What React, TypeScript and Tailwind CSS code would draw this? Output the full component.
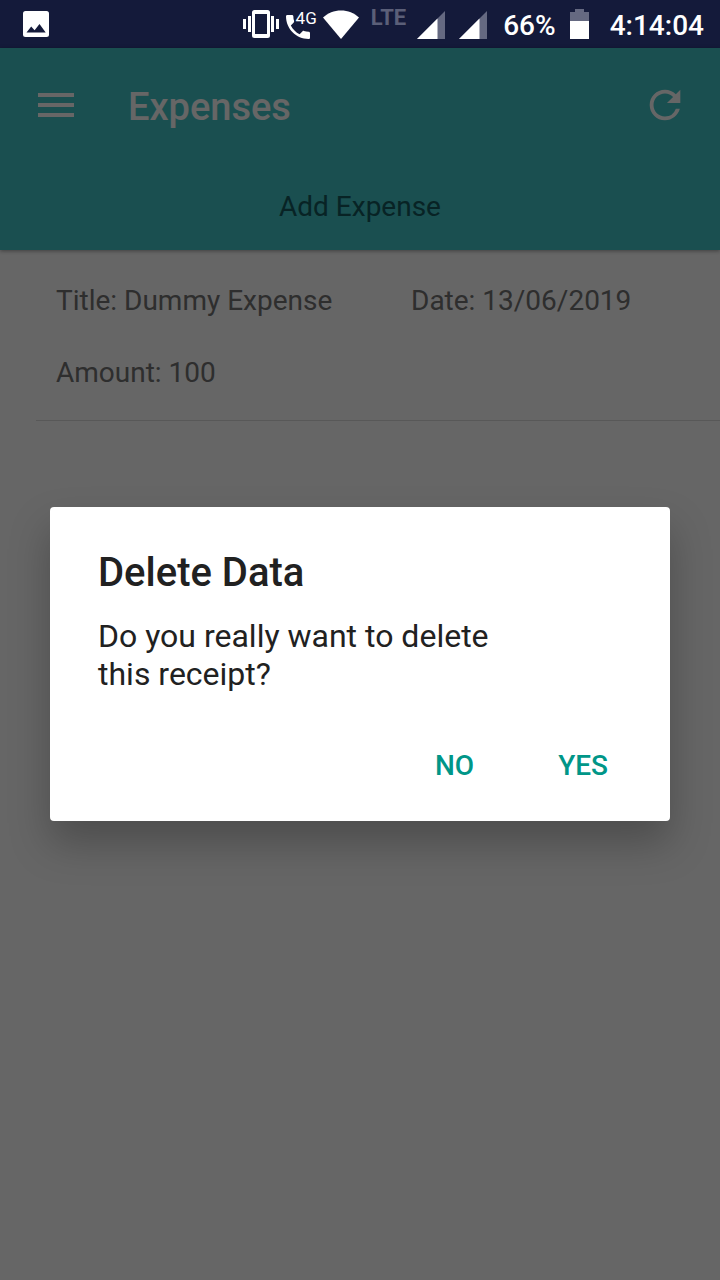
import { MdMenu, MdRefresh } from "react-icons/md";

function PictureIcon() {
  return (
    <svg className="h-[26px] w-[26px]" viewBox="0 0 26 26" aria-hidden="true">
      <rect width="26" height="26" rx="2.500" fill="#fff" />
      <path d="M3.500 21.500 8.200 15.500l3.400 3.700L16.500 13l6.200 8.500z" fill="#141a3a" />
    </svg>
  );
}

function VibrateIcon() {
  return (
    <svg className="h-7 w-9" viewBox="0 0 36 28" fill="#fff" aria-hidden="true">
      <path
        fillRule="evenodd"
        d="M11.500 0h13a2.500 2.500 0 0 1 2.500 2.500v23a2.500 2.500 0 0 1-2.500 2.500h-13a2.500 2.500 0 0 1-2.500-2.500v-23A2.500 2.500 0 0 1 11.500 0zM12 4v20h12V4z"
      />
      <path d="M0 9h3v10H0zM5 6h3v16H5zM28 6h3v16h-3zM33 9h3v10h-3z" />
    </svg>
  );
}

function CallIcon() {
  return (
    <span className="flex h-9 items-start">
      <svg className="mt-[9px] h-6 w-6" viewBox="3 3 18 18" fill="#fff" aria-hidden="true">
        <path d="M6.620 10.790c1.440 2.830 3.760 5.140 6.590 6.590l2.200-2.200c.27-.27.67-.36 1.020-.24 1.120.37 2.330.57 3.570.57.55 0 1 .45 1 1V20c0 .55-.45 1-1 1-9.390 0-17-7.610-17-17 0-.55.45-1 1-1h3.500c.55 0 1 .45 1 1 0 1.250.2 2.450.57 3.570.11.35.03.74-.25 1.020l-2.200 2.200z" />
      </svg>
      <span className="-ml-3.5 mt-0.5 text-[17px] leading-5">4G</span>
    </span>
  );
}

function WifiIcon() {
  return (
    <svg className="h-[29px] w-9" viewBox="0 0 36 29" aria-hidden="true">
      <path d="M0 7.500C5 3 11 .5 18 .5S31 3 36 7.500L18 29z" fill="#fff" />
    </svg>
  );
}

function SignalIcon() {
  return (
    <svg className="h-7 w-7" viewBox="0 0 28 28" aria-hidden="true">
      <path d="M28 0v28H0z" fill="#656981" />
      <path d="M20.500 7.500V28H0z" fill="#fff" />
    </svg>
  );
}

function BatteryIcon() {
  return (
    <svg className="h-[30px] w-[19px]" viewBox="0 0 19 30" aria-hidden="true">
      <path d="M5 0h9v3h5v9H0V3h5z" fill="#656981" />
      <path d="M0 12h19v18H0z" fill="#fff" />
    </svg>
  );
}

function StatusBar() {
  return (
    <div className="flex h-12 shrink-0 items-center justify-between bg-[#141a3a] pl-[23px] pr-4 text-white">
      <PictureIcon />
      <div className="flex items-center">
        <VibrateIcon />
        <span className="ml-[7px]">
          <CallIcon />
        </span>
        <span className="ml-1.5">
          <WifiIcon />
        </span>
        <span className="mb-3 ml-3 text-[22px] font-bold leading-6 text-[#5b5f78]">LTE</span>
        <span className="ml-[11px] mt-0.5 flex gap-3.5">
          <SignalIcon />
          <SignalIcon />
        </span>
        <span className="ml-4 mt-1 text-[28px] font-medium leading-8">66%</span>
        <span className="ml-3.5">
          <BatteryIcon />
        </span>
        <span className="ml-[21px] mt-1 text-[28px] font-medium leading-8">4:14:04</span>
      </div>
    </div>
  );
}

function Header() {
  return (
    <header className="bg-[#41c5c8] shadow-[0_1px_4px_rgba(0,0,0,0.4)]">
      <div className="flex h-[114px] items-center px-8">
        <button type="button" aria-label="Open menu" className="text-white">
          <MdMenu className="size-12" />
        </button>
        <h1 className="ml-12 flex-1 pt-1 text-[38px] font-medium leading-[48px] text-white">Expenses</h1>
        <button type="button" aria-label="Refresh" className="text-white">
          <MdRefresh className="size-[46px]" />
        </button>
      </div>
      <button type="button" className="block h-[88px] w-full pt-0.5 text-[28px] leading-8 text-[#14595c]">
        Add Expense
      </button>
    </header>
  );
}

function ExpenseItem({ title, date, amount }: { title: string; date: string; amount: number }) {
  return (
    <li className="ml-9 border-b border-[#dcdcdc] pb-[31px] pl-5 pt-[35px] text-[28px] leading-8 text-[#737373]">
      <div className="grid grid-cols-[355px_1fr] gap-y-10">
        <span>Title: {title}</span>
        <span>Date: {date}</span>
        <span>Amount: {amount}</span>
      </div>
    </li>
  );
}

function DeleteDialog() {
  return (
    <div className="absolute inset-0 flex items-center justify-center bg-black/60 px-[50px]">
      <div
        role="alertdialog"
        aria-modal="true"
        aria-labelledby="dialog-title"
        aria-describedby="dialog-message"
        className="w-full max-w-[620px] rounded bg-white pb-[15px] pt-[42px] text-[#212121] shadow-[0_22px_40px_rgba(0,0,0,0.25)]"
      >
        <h2 id="dialog-title" className="px-12 text-[40px] font-medium leading-[48px]">
          Delete Data
        </h2>
        <p id="dialog-message" className="ml-12 mt-5 max-w-[440px] text-[32px] leading-[38px]">
          Do you really want to delete this receipt?
        </p>
        <div className="mt-[33px] flex justify-end gap-3 pr-[26px] text-[28px] font-medium leading-8 text-[#009688]">
          <button type="button" className="h-20 px-9">
            NO
          </button>
          <button type="button" className="h-20 px-9">
            YES
          </button>
        </div>
      </div>
    </div>
  );
}

export default function App() {
  return (
    <div className="flex min-h-screen flex-col bg-white font-[Roboto,sans-serif]">
      <StatusBar />
      <div className="relative flex-1">
        <Header />
        <main>
          <ul>
            <ExpenseItem title="Dummy Expense" date="13/06/2019" amount={100} />
          </ul>
        </main>
        <DeleteDialog />
      </div>
    </div>
  );
}
